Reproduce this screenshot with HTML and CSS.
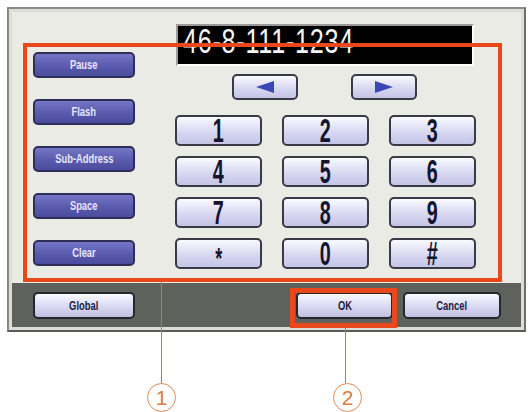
FILE: index.html
```html
<!DOCTYPE html>
<html>
<head>
<meta charset="utf-8">
<link rel="stylesheet" href="styles.css">
</head>
<body>
<div class="screen">
  <div class="top">
    <div class="side">
      <div class="fbtn"><span class="sq">Pause</span></div>
      <div class="fbtn"><span class="sq">Flash</span></div>
      <div class="fbtn"><span class="sq">Sub-Address</span></div>
      <div class="fbtn"><span class="sq">Space</span></div>
      <div class="fbtn"><span class="sq">Clear</span></div>
    </div>
    <div class="main">
      <div class="display"><span class="num">46-8-111-1234</span></div>
      <div class="arrows">
        <div class="abtn"><svg width="18" height="12" viewBox="0 0 18 12"><polygon points="0,6 18,0 18,12" fill="#3b47b4"/></svg></div>
        <div class="abtn"><svg width="18" height="12" viewBox="0 0 18 12"><polygon points="18,6 0,0 0,12" fill="#3b47b4"/></svg></div>
      </div>
      <div class="keypad">
        <div class="key"><span class="dg">1</span></div>
        <div class="key"><span class="dg">2</span></div>
        <div class="key"><span class="dg">3</span></div>
        <div class="key"><span class="dg">4</span></div>
        <div class="key"><span class="dg">5</span></div>
        <div class="key"><span class="dg">6</span></div>
        <div class="key"><span class="dg">7</span></div>
        <div class="key"><span class="dg">8</span></div>
        <div class="key"><span class="dg">9</span></div>
        <div class="key"><span class="dg star">*</span></div>
        <div class="key"><span class="dg">0</span></div>
        <div class="key"><span class="dg">#</span></div>
      </div>
    </div>
  </div>
  <div class="bar">
    <div class="bbtn wide"><span class="sq">Global</span></div>
    <div class="bgroup">
      <div class="bbtn ok"><span class="sq">OK</span></div>
      <div class="bbtn cancel"><span class="sq">Cancel</span></div>
    </div>
  </div>
</div>
<div class="mark mark-area"></div>
<div class="mark mark-ok"></div>
<div class="lead lead-1"></div>
<div class="lead lead-2"></div>
<div class="circ circ-1">1</div>
<div class="circ circ-2">2</div>
</body>
</html>
```
FILE: styles.css
```css
html, body {
  margin: 0;
  padding: 0;
  background: #ffffff;
}
body {
  width: 529px;
  height: 412px;
  position: relative;
  overflow: hidden;
  font-family: "Liberation Sans", Arial, sans-serif;
}
.screen {
  margin: 7px 0 0 7px;
  width: 519px;
  box-sizing: border-box;
  border: 2px solid #8a8a88;
  border-right-color: #6e6e6c;
  border-bottom-color: #5a5a58;
  background: #dcdcd8;
  padding: 3px;
}
.top {
  display: flex;
  height: 271px;
  background: #ebebe6;
  padding-left: 21px;
  box-sizing: border-box;
}
.side {
  display: flex;
  flex-direction: column;
  gap: 21px;
  padding-top: 40px;
}
.fbtn {
  width: 102px;
  height: 26px;
  box-sizing: border-box;
  border: 2px solid #2e2e58;
  border-radius: 5px;
  background: linear-gradient(#7676c6, #5a5aae 55%, #4c4c9e);
  display: flex;
  align-items: center;
  justify-content: center;
  color: #e6e6fa;
  font-size: 12px;
  font-weight: bold;
}
.sq {
  display: inline-block;
  transform: scaleX(0.78);
  white-space: nowrap;
}
.main {
  margin-left: 41px;
  padding-top: 12px;
}
.display {
  width: 298px;
  height: 42px;
  box-sizing: border-box;
  background: #000;
  border: 2px solid;
  border-color: #9a9a98 #ffffff #ffffff #9a9a98;
  padding-left: 5px;
}
.num {
  display: inline-block;
  color: #f4f4f4;
  font-size: 35px;
  line-height: 30px;
  transform: scaleX(0.72);
  transform-origin: left top;
  white-space: nowrap;
  letter-spacing: 1px;
}
.arrows {
  display: flex;
  gap: 53px;
  padding-left: 56px;
  margin-top: 8px;
}
.abtn {
  width: 66px;
  height: 26px;
  box-sizing: border-box;
  border: 2px solid #3a3a46;
  border-radius: 5px;
  background: linear-gradient(#fafaff, #d6d6f0 60%, #c4c4e6);
  display: flex;
  align-items: center;
  justify-content: center;
}
.keypad {
  margin-top: 15px;
  margin-left: -1px;
  display: grid;
  grid-template-columns: repeat(3, 87px);
  grid-auto-rows: 31px;
  column-gap: 20px;
  row-gap: 10px;
}
.key {
  box-sizing: border-box;
  border: 2px solid #3a3a46;
  border-radius: 5px;
  background: linear-gradient(#fafaff, #d8d8f2 55%, #c4c4e6);
  display: flex;
  align-items: center;
  justify-content: center;
}
.dg {
  display: inline-block;
  color: #14142e;
  font-size: 33px;
  font-weight: bold;
  line-height: 27px;
  transform: scaleX(0.6);
}
.star {
  font-size: 30px;
  line-height: 30px;
  padding-top: 8px;
}
.bar {
  height: 44px;
  background: #5e615c;
  display: flex;
  justify-content: space-between;
  align-items: flex-start;
  padding: 9px 20px 0 21px;
  box-sizing: border-box;
}
.bgroup {
  display: flex;
  gap: 10px;
}
.bbtn {
  height: 27px;
  box-sizing: border-box;
  border: 2px solid #26262e;
  border-radius: 5px;
  background: linear-gradient(#fafaff, #d8d8f2 55%, #c0c0e2);
  display: flex;
  align-items: center;
  justify-content: center;
  color: #1c1c3c;
  font-size: 12px;
  font-weight: bold;
}
.wide { width: 102px; }
.ok { width: 97px; }
.cancel { width: 98px; }
.mark {
  position: absolute;
  box-sizing: border-box;
  border: 4px solid #e9481d;
}
.mark-area {
  left: 23px;
  top: 43px;
  width: 479px;
  height: 239px;
}
.mark-ok {
  left: 290px;
  top: 288px;
  width: 107px;
  height: 40px;
  border-width: 5px;
}
.lead {
  position: absolute;
  width: 1px;
  background: #a98064;
}
.lead-1 {
  left: 161px;
  top: 282px;
  height: 101px;
}
.lead-2 {
  left: 345px;
  top: 328px;
  height: 55px;
}
.circ {
  position: absolute;
  top: 383px;
  width: 29px;
  height: 29px;
  box-sizing: border-box;
  border: 1.5px solid #e08a55;
  border-radius: 50%;
  display: flex;
  align-items: center;
  justify-content: center;
  color: #d77b45;
  font-size: 21px;
  line-height: 1;
}
.circ-1 { left: 147px; }
.circ-2 { left: 333px; }
```
